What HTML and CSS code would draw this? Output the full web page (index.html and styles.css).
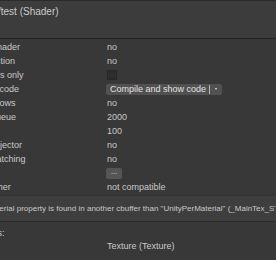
FILE: index.html
```html
<!DOCTYPE html>
<html>
<head>
<meta charset="utf-8">
<link rel="stylesheet" href="styles.css">
</head>
<body>
<div class="window">
  <div class="header">
    <div class="title">Unlit/test (Shader)</div>
  </div>
  <div class="content">
    <div class="row"><span class="label">Surface shader</span><span class="value">no</span></div>
    <div class="row"><span class="label">Fixed function</span><span class="value">no</span></div>
    <div class="row"><span class="label">Preprocess only</span><span class="value"><span class="checkbox"></span></span></div>
    <div class="row"><span class="label">Compiled code</span><span class="value"><span class="dropdown"><span class="dd-text">Compile and show code</span><span class="dd-sep"></span><span class="dd-arrow"></span></span></span></div>
    <div class="row"><span class="label">Cast shadows</span><span class="value">no</span></div>
    <div class="row"><span class="label">Render queue</span><span class="value">2000</span></div>
    <div class="row"><span class="label">LOD</span><span class="value">100</span></div>
    <div class="row"><span class="label">Ignore projector</span><span class="value">no</span></div>
    <div class="row"><span class="label">Disable batching</span><span class="value">no</span></div>
    <div class="row"><span class="label">Keywords</span><span class="value"><span class="button">...</span></span></div>
    <div class="row"><span class="label">SRP Batcher</span><span class="value">not compatible</span></div>
    <div class="helpbox">Material property is found in another cbuffer than "UnityPerMaterial" (_MainTex_ST)</div>
    <div class="row"><span class="label section">Properties:</span></div>
    <div class="row prop"><span class="label">_MainTex</span><span class="value">Texture (Texture)</span></div>
  </div>
</div>
</body>
</html>
```

FILE: styles.css
```css
html, body {
  margin: 0;
  padding: 0;
  background: #383838;
}
body {
  width: 276px;
  height: 260px;
  overflow: hidden;
  font-family: "Liberation Sans", Arial, sans-serif;
  font-size: 9px;
  color: #c8c8c8;
}
.window {
  width: 276px;
  height: 260px;
  overflow: hidden;
  display: flex;
  flex-direction: column;
}
.header {
  box-sizing: border-box;
  height: 39px;
  background: #3c3c3c;
  border-top: 1px solid #2b2b2b;
  border-bottom: 1px solid #232323;
  padding-top: 4px;
}
.title {
  margin-left: -22px;
  font-size: 10px;
  line-height: 14px;
  color: #cacaca;
  white-space: nowrap;
}
.content {
  margin-left: -41px;
  padding-top: 1px;
  display: flex;
  flex-direction: column;
}
.row {
  height: 14px;
  display: flex;
  align-items: center;
  white-space: nowrap;
}
.label {
  width: 148px;
  flex: none;
  overflow: hidden;
}
.label.section {
  box-sizing: border-box;
  padding-left: 2px;
}
.value {
  display: flex;
  align-items: center;
}
.checkbox {
  box-sizing: border-box;
  width: 10px;
  height: 10px;
  background: #2e2e2e;
  border: 1px solid #272727;
  border-radius: 1px;
}
.dropdown {
  box-sizing: border-box;
  margin-left: -1px;
  width: 116px;
  height: 11px;
  background: #515151;
  border-radius: 2px;
  display: flex;
  align-items: center;
  padding-left: 4px;
  color: #e2e2e2;
}
.dd-text {
  width: 99px;
  flex: none;
}
.dd-sep {
  width: 1px;
  height: 9px;
  background: #b4b4b4;
  flex: none;
}
.dd-arrow {
  margin-left: 5px;
  width: 0;
  height: 0;
  border-left: 1.5px solid transparent;
  border-right: 1.5px solid transparent;
  border-top: 2px solid #e6e6e6;
}
.button {
  box-sizing: border-box;
  margin-left: -1px;
  width: 16px;
  height: 11px;
  background: #555555;
  border-radius: 2px;
  color: #dedede;
  display: flex;
  align-items: center;
  justify-content: center;
  font-size: 8px;
  line-height: 8px;
  padding-bottom: 2px;
}
.helpbox {
  box-sizing: border-box;
  margin-top: 1px;
  margin-bottom: 4px;
  margin-left: 20px;
  width: 360px;
  height: 27px;
  background: #3e3e3e;
  border-top: 1px solid #333333;
  border-bottom: 1px solid #2a2a2a;
  padding-left: 7px;
  display: flex;
  align-items: center;
  font-size: 8px;
  white-space: nowrap;
  color: #c8c8c8;
}
.row.prop {
  margin-top: -1px;
}
```
